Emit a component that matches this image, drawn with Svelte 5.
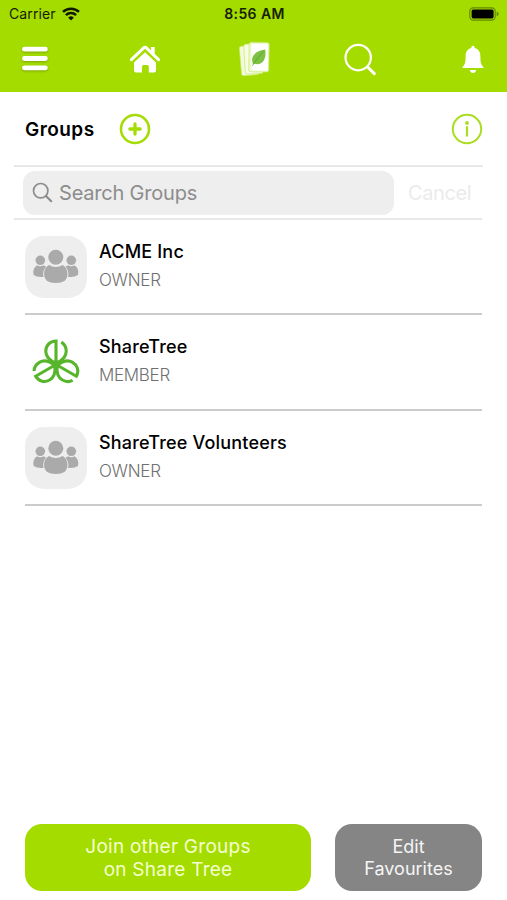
<script lang="ts">
  interface Group {
    name: string;
    role: string;
    logo?: 'tree';
  }

  const groups: Group[] = [
    { name: 'ACME Inc', role: 'OWNER' },
    { name: 'ShareTree', role: 'MEMBER', logo: 'tree' },
    { name: 'ShareTree Volunteers', role: 'OWNER' }
  ];

  let query = $state('');
</script>

<div class="screen">
  <header>
    <div class="status">
      <div class="carrier">
        <span>Carrier</span>
        <svg width="18" height="14" viewBox="0 0 18 14" fill="none" stroke="#101800" stroke-width="2.5">
          <path d="M1 4.9a11.5 11.5 0 0 1 16 0" />
          <path d="M3.9 8.2a7.3 7.3 0 0 1 10.2 0" />
          <path d="M9 13.5 6.2 10.7a4 4 0 0 1 5.6 0z" fill="#101800" stroke="none" />
        </svg>
      </div>
      <span class="clock">8:56 AM</span>
      <svg class="battery" width="31" height="14" viewBox="0 0 31 14">
        <rect x=".8" y=".8" width="25.4" height="12.4" rx="3.6" fill="none" stroke="#658800" stroke-width="1.2" />
        <rect x="2.6" y="2.6" width="22" height="8.8" rx="1.6" fill="#000" />
        <path d="M27.7 4.6v4.8q2-1 2-2.4t-2-2.4z" fill="#658800" />
      </svg>
    </div>

    <nav>
      <button aria-label="Menu">
        <svg class="menu" width="28" height="28" viewBox="0 0 28 28">
          <path d="M3.4 4.2h21M3.4 13.500h21M3.4 22.800h21" stroke="#fff" stroke-width="4.8" stroke-linecap="round" />
        </svg>
      </button>
      <button aria-label="Home">
        <svg width="32" height="30" viewBox="0 0 32 30">
          <path d="M2.4 15.6 14.7 3.8q1.3-1.2 2.6 0l12.3 11.8" fill="none" stroke="#fff" stroke-width="3" stroke-linecap="round" stroke-linejoin="round" />
          <path d="M22 3h3.7v8.3L22 7.8z" fill="#fff" />
          <path d="m16 8.3 11 10.3v8q0 2-2 2h-5.2v-6q0-1.6-1.6-1.6h-3.6q-1.6 0-1.6 1.6v6H7q-2 0-2-2v-8z" fill="#fff" />
        </svg>
      </button>
      <button aria-label="Cards">
        <svg width="34" height="36" viewBox="0 0 34 36">
          <g stroke="#c6ea68" stroke-width=".7">
            <rect x="2.5" y="4.600" width="18" height="29.500" rx="2" fill="#f3fbdc" transform="rotate(-5 12 20)" />
            <rect x="6.5" y="2.800" width="18" height="30" rx="2" fill="#f6fce6" transform="rotate(-3 15 18)" />
            <rect x="11" y="1.4" width="20" height="29.500" rx="2" fill="#edf8ce" transform="rotate(1 20 16)" />
          </g>
          <rect x="13.5" y="3" width="16.4" height="26.5" rx=".8" fill="#fff" />
          <path d="M15 23.2c-3.3-8.6 2.8-13 12.2-14.6 1.6 9-2.7 16.5-10.4 14.2z" fill="#7cc142" />
          <path d="M14.4 24.8C17.5 19.8 21 15.3 25.5 10.5" fill="none" stroke="#4f9d2a" stroke-width=".7" />
        </svg>
      </button>
      <button aria-label="Search">
        <svg width="34" height="34" viewBox="0 0 34 34" fill="none" stroke="#fff">
          <circle cx="15.2" cy="15.6" r="12.7" stroke-width="2.2" />
          <path d="m24.6 25 6.7 6.6" stroke-width="3" stroke-linecap="round" />
        </svg>
      </button>
      <button aria-label="Notifications">
        <svg width="22" height="29" viewBox="0 0 22 29" fill="#fff">
          <path d="M11 .8c1.1 0 1.7.8 1.7 2.2 3.9.9 5.7 4 5.7 8.4 0 6.2.7 8.3 3.1 10.6V23H.5v-1c2.4-2.3 3.1-4.4 3.1-10.6 0-4.4 1.8-7.5 5.7-8.4 0-1.4.6-2.2 1.7-2.2z" />
          <path d="M7.8 25h6.4q-.6 3-3.2 3t-3.2-3z" />
        </svg>
      </button>
    </nav>
  </header>

  <main>
    <section class="title-row">
      <h1>Groups</h1>
      <button class="add" aria-label="Add group">
        <svg width="32" height="32" viewBox="0 0 32 32" fill="none" stroke="#a6dc06">
          <circle cx="16" cy="16" r="14" stroke-width="2.6" />
          <path d="M16 10.9v10.2M10.9 16h10.2" stroke-width="3.3" stroke-linecap="round" />
        </svg>
      </button>
      <button class="info" aria-label="Information">
        <svg width="32" height="32" viewBox="0 0 32 32" fill="none" stroke="#aadd22">
          <circle cx="16" cy="16" r="14.2" stroke-width="2" />
          <circle cx="16" cy="10" r="1.9" fill="#aadd22" stroke="none" />
          <path d="M16 14v8.7" stroke-width="2.2" stroke-linecap="round" />
        </svg>
      </button>
    </section>

    <section class="search-row">
      <label class="field">
        <svg width="22" height="22" viewBox="0 0 22 22" fill="none" stroke="#8c8c8c" stroke-width="1.7">
          <circle cx="8.7" cy="8.7" r="7.2" />
          <path d="m14 14 5.200 5.200" stroke-width="2.2" stroke-linecap="round" />
        </svg>
        <input bind:value={query} placeholder="Search Groups" aria-label="Search Groups" />
      </label>
      <button class="cancel">Cancel</button>
    </section>

    <ul>
      {#each groups as group}
        <li>
          {#if group.logo === 'tree'}
            <div class="avatar">
              <svg width="62" height="62" viewBox="0 0 62 62" fill="none" stroke="#57b52c" stroke-width="3.1">
                {#each [0, 120, 240] as angle}
                  <g transform="translate(31 33.5) rotate({angle})">
                    <path d="M0 0V-23.500C-6.500-23.500-10.200-18.500-10.200-13.300-10.200-7.500-6-3.800 0-1.500 6-3.800 10.200-7.500 10.200-13.300 10.200-17.200 8.300-20.500 5.300-22.300" />
                  </g>
                {/each}
              </svg>
            </div>
          {:else}
            <div class="avatar filled">
              <svg width="62" height="62" viewBox="0 0 62 62" fill="#aaa">
                <circle cx="15.3" cy="24.3" r="4.8" />
                <circle cx="46.3" cy="24.3" r="4.8" />
                <path d="M12 29.200q3.3 2 6.600 0l2.500 1.600q-4 4.300-2.600 10.200-6.700.5-9.800-1.900-1.800-6.500 3.300-9.900z" />
                <path d="M49.600 29.200q-3.3 2-6.600 0l-2.500 1.600q4 4.300 2.600 10.200 6.700.5 9.800-1.900 1.800-6.500-3.300-9.900z" />
                <circle cx="30.8" cy="21.3" r="7.5" />
                <path d="M24 28.900q6.800 4.200 13.600 0c3.100 1.500 4.900 4.800 4.900 8.700q0 4.700-3 7.400-3.200 2-8.700 2t-8.700-2q-3-2.700-3-7.400c0-3.900 1.800-7.200 4.900-8.700z" />
              </svg>
            </div>
          {/if}
          <div class="details">
            <h2>{group.name}</h2>
            <p>{group.role}</p>
          </div>
        </li>
      {/each}
    </ul>
  </main>

  <footer>
    <button class="join">Join other Groups<br />on Share Tree</button>
    <button class="edit">Edit<br />Favourites</button>
  </footer>
</div>

<style>
  :global(body) {
    margin: 0;
    background: #fff;
  }

  .screen {
    display: flex;
    flex-direction: column;
    box-sizing: border-box;
    width: 507px;
    height: 900px;
    color: #000;
    font-family: Inter, 'Liberation Sans', sans-serif;
  }

  svg {
    display: block;
    flex: none;
  }

  button {
    border: 0;
    background: none;
    color: inherit;
    font: inherit;
    padding: 0;
  }

  h1,
  h2,
  p,
  ul {
    margin: 0;
    padding: 0;
  }

  header {
    height: 92px;
    flex: none;
    background: #a4dc00;
  }

  .status {
    display: grid;
    grid-template-columns: 1fr auto 1fr;
    align-items: center;
    height: 27px;
    padding: 0 7px 0 9px;
    color: #172000;
    font-size: 14px;
  }

  .carrier {
    display: flex;
    align-items: center;
    gap: 6px;
    letter-spacing: 0.1px;
  }

  .clock {
    font-weight: 600;
    letter-spacing: 0.4px;
  }

  .battery {
    justify-self: end;
  }

  nav {
    display: grid;
    grid-template-columns: 108px 109px 105px 119px auto;
    align-items: center;
    justify-content: start;
    justify-items: start;
    height: 64px;
    padding-left: 21px;
  }

  .menu {
    filter: drop-shadow(0 1px 1px rgba(60, 90, 0, 0.4));
  }

  .title-row {
    display: flex;
    align-items: center;
    box-sizing: border-box;
    height: 75px;
    margin: 0 24px 0 14px;
    border-bottom: 2px solid #e8e8e8;
    padding-left: 11px;
  }

  h1 {
    width: 94px;
    padding-top: 2px;
    font-size: 19px;
    font-weight: 600;
    letter-spacing: 0.45px;
  }

  .info {
    margin-left: auto;
  }

  .search-row {
    display: flex;
    align-items: center;
    box-sizing: border-box;
    height: 53px;
    margin: 0 25px 0 14px;
    border-bottom: 2px solid #e8e8e8;
    padding-left: 9px;
  }

  .field {
    display: flex;
    align-items: center;
    gap: 5px;
    box-sizing: border-box;
    width: 371px;
    height: 44px;
    border-radius: 12px;
    background: #eee;
    padding-left: 9px;
  }

  input {
    width: 300px;
    border: 0;
    outline: 0;
    background: none;
    font: inherit;
    font-size: 20px;
    letter-spacing: -0.2px;
    padding: 1px 0 0;
  }

  input::placeholder {
    color: #8c8c8c;
    opacity: 1;
  }

  .cancel {
    margin-left: 14px;
    color: #ebebeb;
    font-size: 20px;
    letter-spacing: -0.4px;
  }

  ul {
    margin: 0 25px;
    list-style: none;
  }

  li {
    display: flex;
    gap: 12px;
    box-sizing: border-box;
    height: 95.3px;
    border-bottom: 2px solid #ccc;
    padding-top: 16px;
  }

  .avatar {
    width: 62px;
    height: 62px;
    border-radius: 19px;
  }

  .filled {
    background: #eee;
  }

  h2 {
    margin-top: 4px;
    font-size: 18px;
    font-weight: 500;
    letter-spacing: 0.18px;
    line-height: 24px;
  }

  p {
    margin-top: 4px;
    color: #707070;
    font-size: 17px;
    font-weight: 300;
    letter-spacing: -0.3px;
    line-height: 24px;
  }

  footer {
    display: flex;
    gap: 24px;
    margin-top: auto;
    padding: 0 25px 9px;
  }

  footer button {
    height: 67px;
    border-radius: 17px;
    font-size: 19px;
    line-height: 23px;
  }

  .join {
    width: 286px;
    background: #a4dc00;
    color: #f4ffcf;
    letter-spacing: 0.25px;
  }

  .edit {
    width: 147px;
    background: #858585;
    color: #f5f5f5;
    font-size: 18px;
    line-height: 22px;
  }
</style>
